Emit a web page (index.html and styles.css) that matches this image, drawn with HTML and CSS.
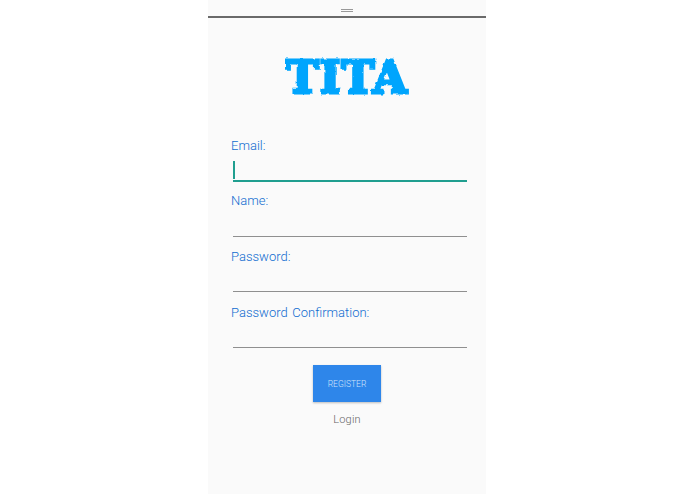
FILE: index.html
```html
<!DOCTYPE html>
<html lang="en">
<head>
<meta charset="utf-8">
<title>TITA Register</title>
<link rel="stylesheet" href="styles.css">
</head>
<body>
<svg class="defs" width="0" height="0" aria-hidden="true">
  <filter id="rough" x="-5%" y="-10%" width="110%" height="120%">
    <feTurbulence type="fractalNoise" baseFrequency="0.18" numOctaves="2" seed="7" result="noise"/>
    <feDisplacementMap in="SourceGraphic" in2="noise" scale="3" xChannelSelector="R" yChannelSelector="G"/>
  </filter>
</svg>
<main class="phone">
  <header class="topbar"><span class="handle"></span></header>
  <h1 class="logo">TITA</h1>
  <form class="form">
    <div class="field">
      <label class="label">Email:</label>
      <div class="input input-active"><span class="caret"></span></div>
    </div>
    <div class="field">
      <label class="label">Name:</label>
      <div class="input"></div>
    </div>
    <div class="field">
      <label class="label">Password:</label>
      <div class="input"></div>
    </div>
    <div class="field">
      <label class="label">Password Confirmation:</label>
      <div class="input"></div>
    </div>
    <div class="actions">
      <button class="button" type="button">REGISTER</button>
      <a class="login">Login</a>
    </div>
  </form>
</main>
</body>
</html>
```
FILE: styles.css
```css
html, body {
  margin: 0;
  padding: 0;
  height: 100%;
  background: #ffffff;
  overflow: hidden;
}
body {
  display: flex;
  justify-content: flex-start;
  padding-left: 208px;
  box-sizing: border-box;
  font-family: Roboto, "Liberation Sans", sans-serif;
}
.defs {
  position: absolute;
}
.phone {
  width: 278px;
  height: 494px;
  background: #fafafa;
  display: flex;
  flex-direction: column;
}
.topbar {
  height: 16px;
  border-bottom: 2px solid #6a6a6a;
  display: flex;
  justify-content: center;
}
.handle {
  width: 12px;
  height: 1px;
  margin-top: 9px;
  border-top: 1px solid #999999;
  border-bottom: 1px solid #999999;
}
.logo {
  margin: 34px 0 0;
  height: 51px;
  line-height: 52px;
  text-align: center;
  font-family: "DejaVu Serif", serif;
  font-weight: 700;
  font-size: 44px;
  letter-spacing: 1px;
  color: #05a5fd;
  -webkit-text-stroke: 3px #05a5fd;
  filter: url(#rough);
}
.form {
  margin-top: 32px;
  padding: 0 19px 0 23px;
  display: flex;
  flex-direction: column;
}
.field {
  height: 55.7px;
  display: flex;
  flex-direction: column;
}
.label {
  margin-top: 1.5px;
  font-size: 13px;
  font-weight: 300;
  line-height: 18px;
  letter-spacing: 0;
  word-spacing: 1.5px;
  color: #0f6cd0;
}
.input {
  margin: 7.5px 0 0 2px;
  height: 18px;
  border-bottom: 1px solid #8f8f8f;
}
.input-active {
  border-bottom: 2px solid #1f9e8f;
}
.caret {
  display: block;
  width: 2px;
  height: 18px;
  background: #1f9e8f;
  margin-top: -1px;
}
.actions {
  margin-top: 7px;
  display: flex;
  flex-direction: column;
  align-items: center;
  padding-right: 4px;
}
.button {
  width: 68px;
  height: 37px;
  border: 0;
  border-radius: 0;
  padding: 2px 0 0;
  background: #2e86ea;
  color: #cfe3fa;
  font-family: Roboto, "Liberation Sans", sans-serif;
  font-size: 8.5px;
  font-weight: 300;
  box-shadow: 0 1px 2px rgba(0, 0, 0, 0.25);
}
.login {
  margin-top: 10px;
  font-size: 11px;
  font-weight: 300;
  line-height: 16px;
  letter-spacing: 0.2px;
  color: #666666;
}
```
